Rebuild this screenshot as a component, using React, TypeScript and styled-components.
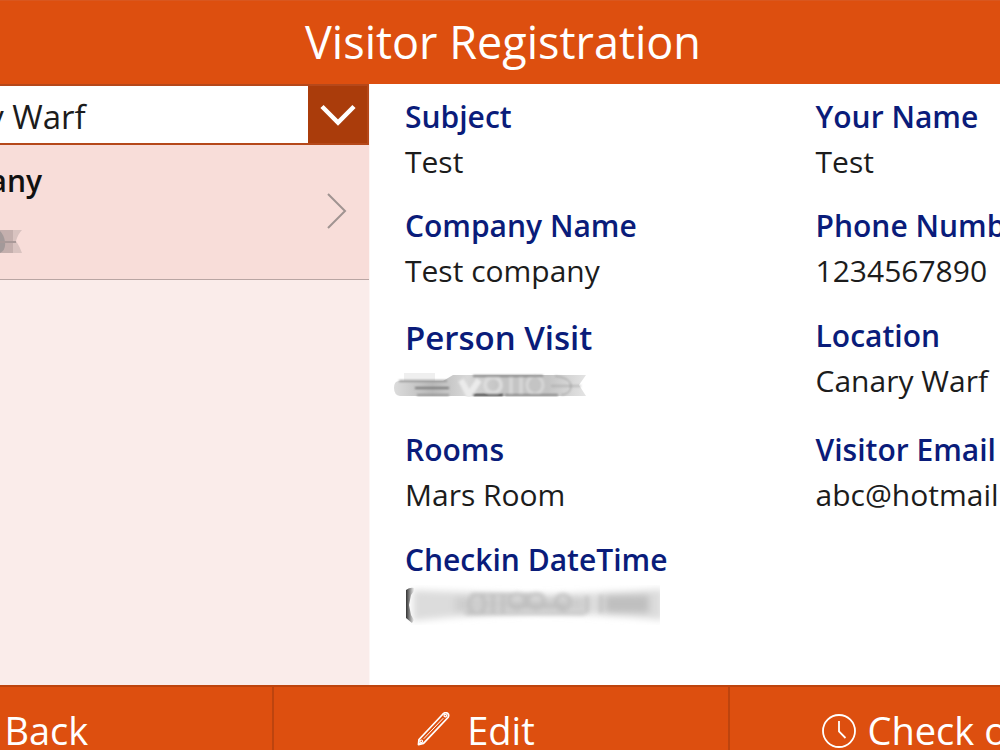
import React from "react";
import styled, { createGlobalStyle } from "styled-components";

const GlobalStyle = createGlobalStyle`
  * { box-sizing: border-box; }
  html, body { margin: 0; overflow: hidden; }
  body { font-family: "Open Sans", "Noto Sans", sans-serif; color: #1c1c1c; background: #fff; }
`;

const Page = styled.div`
  display: flex;
  flex-direction: column;
  height: 100vh;
  overflow: hidden;
`;

const Header = styled.header`
  flex: none;
  height: 84px;
  padding-left: 6px;
  background: #dd4f0f;
  border-top: 1px solid #d9571f;
  text-align: center;
`;

const Title = styled.h1`
  margin: 0;
  color: #fff;
  font-size: 45px;
  line-height: 82px;
  font-weight: 400;
`;

const Main = styled.main`
  flex: 1;
  min-height: 0;
  display: flex;
`;

const Sidebar = styled.aside`
  flex: none;
  width: 37%;
  background: #faecea;
  overflow: hidden;
  border-right: 1px solid #fdf6f5;
`;

const Picker = styled.label`
  display: flex;
  height: 61px;
  margin-left: -120px;
  border: 2px solid #b5481a;
  background: #fff;
`;

const PickerSelect = styled.select`
  flex: 1;
  min-width: 0;
  appearance: none;
  border: 0;
  padding: 4px 0 0 14px;
  background: #fff;
  color: #1c1c1c;
  font: 400 33px/50px "Open Sans", "Noto Sans", sans-serif;
`;

const PickerArrow = styled.span`
  flex: none;
  width: 59px;
  display: flex;
  align-items: center;
  justify-content: center;
  background: #aa3c0b;
`;

const List = styled.ul`
  margin: 0;
  padding: 0;
  list-style: none;
`;

const Visit = styled.li`
  display: flex;
  align-items: center;
  justify-content: space-between;
  height: 135px;
  margin-left: -180px;
  padding: 0 20px 2px 0;
  background: #f8ddd9;
  border-bottom: 1px solid #b9a5a3;
`;

const VisitText = styled.div`
  width: 222px;
  display: flex;
  flex-direction: column;
  align-items: flex-end;
  gap: 10px;
`;

const VisitName = styled.strong`
  font-size: 30px;
  line-height: 44px;
  font-weight: 600;
  color: #111;
  white-space: nowrap;
`;

const VisitPerson = styled.div`
  height: 50px;
  display: flex;
  align-items: center;
  padding: 6px 20px 0 0;
`;

const Details = styled.section`
  flex: 1;
  min-width: 0;
  display: grid;
  grid-template-columns: 69% 69%;
  padding: 10px 0 0 35px;
  overflow: hidden;
`;

const FieldColumn = styled.dl`
  margin: 0;
  display: grid;
  grid-template-rows: 109px 110px 114px 110px 110px;
`;

const Field = styled.div`
  white-space: nowrap;
`;

const Label = styled.dt<{ $large?: boolean }>`
  font-size: ${(p) => (p.$large ? 33 : 30)}px;
  line-height: ${(p) => (p.$large ? 50 : 46)}px;
  font-weight: 600;
  color: #0a1c7a;
`;

const Value = styled.dd`
  margin: 0;
  font-size: 30px;
  line-height: 44px;
`;

const PersonSmudge = styled.svg`
  display: block;
  margin: 10px 0 0 -12px;
`;

const DateSmudge = styled.svg`
  display: block;
  margin-top: 2px;
`;

const Footer = styled.footer`
  flex: none;
  display: flex;
  height: 65px;
  width: 137%;
  margin-left: -18.3%;
  overflow: hidden;
`;

const Action = styled.button`
  flex: 1;
  height: 88px;
  display: flex;
  align-items: center;
  justify-content: center;
  gap: 12px;
  padding: 0 50px 0 0;
  border: 0;
  border-top: 2px solid #bd440e;
  border-right: 2px solid #bd440e;
  background: #dd4f0f;
  color: #fff;
  font: 400 38px/50px "Open Sans", "Noto Sans", sans-serif;
  white-space: nowrap;
`;

function BackIcon() {
  return (
    <svg width="42" height="36" viewBox="0 0 42 36" fill="none" stroke="#fff" strokeWidth="2" aria-hidden="true">
      <path d="M36 18H3M17 4L3 18l14 14" />
    </svg>
  );
}

function PencilIcon() {
  return (
    <svg width="38" height="36" viewBox="0 0 38 36" fill="none" stroke="#fff" strokeWidth="1.8" strokeLinejoin="round" strokeLinecap="round" aria-hidden="true">
      <path d="M1.500 32.500L2 27.500 26 2Q28.500 -.2 30.500 1.300T31 5.500L6.500 31.300Z" />
      <path d="M7 26.500L26 6.500" strokeWidth="1" />
      <circle cx="28.300" cy="3.600" r="1.300" strokeWidth="1.200" />
      <circle cx="4.300" cy="29.300" r="1.300" strokeWidth="1.200" />
    </svg>
  );
}

function ClockIcon() {
  return (
    <svg width="34" height="36" viewBox="0 0 34 36" fill="none" stroke="#fff" strokeWidth="1.8" aria-hidden="true">
      <circle cx="17" cy="19" r="16" />
      <path d="M17 9v10.500l6.500 6.500" />
    </svg>
  );
}

function PersonBlur() {
  return (
    <PersonSmudge width="194" height="24" viewBox="0 0 194 24" role="img" aria-label="Hidden name">
      <defs>
        <filter id="soft" x="-10%" y="-30%" width="120%" height="160%"><feGaussianBlur stdDeviation="1" /></filter>
        <linearGradient id="pg" x1="0" x2="1">
          <stop offset="0" stopColor="#dcdcdc" /><stop offset=".2" stopColor="#b8b8b8" />
          <stop offset=".38" stopColor="#d8d8d8" /><stop offset=".55" stopColor="#c4c4c4" />
          <stop offset=".8" stopColor="#c4c4c4" /><stop offset="1" stopColor="#e4e4e4" />
        </linearGradient>
      </defs>
      <path d="M11 0H42V8H11Z" fill="#efefef" />
      <path d="M6 8H50L60 2H193L186 12 193 23H7Q1 22 1 15T6 8Z" fill="url(#pg)" />
      <g fill="none" filter="url(#soft)">
        <path d="M68 7L76 22 86 7" stroke="#ebebeb" strokeWidth="6" />
        <ellipse cx="100" cy="12" rx="8" ry="8" stroke="#dcdcdc" strokeWidth="4" />
        <ellipse cx="142" cy="12" rx="8" ry="9" stroke="#d6d6d6" strokeWidth="3" />
        <path d="M118 4V21M128 4V21" stroke="#d4d4d4" strokeWidth="4" />
        <path d="M22 15H56" stroke="#777" strokeWidth="2" />
        <path d="M6 8H54M24 22H56" stroke="#999" strokeWidth="2" />
        <path d="M80 22H110" stroke="#333" strokeWidth="2" />
        <path d="M80 3H150M112 22H165" stroke="#888" strokeWidth="2" />
        <path d="M162 3Q178 5 178 13T168 22M158 13H188" stroke="#999" strokeWidth="1" />
      </g>
    </PersonSmudge>
  );
}

function DateBlur() {
  return (
    <DateSmudge width="255" height="40" viewBox="0 0 255 40" role="img" aria-label="Hidden date">
      <defs>
        <filter id="softer" x="-10%" y="-30%" width="120%" height="160%"><feGaussianBlur stdDeviation="3.500" /></filter>
        <filter id="fine" x="-10%" y="-30%" width="120%" height="160%"><feGaussianBlur stdDeviation="2" /></filter>
        <linearGradient id="edge" x1="0" x2="1"><stop offset="0" stopColor="#333" /><stop offset="1" stopColor="#eee" /></linearGradient>
      </defs>
      <g filter="url(#softer)">
        <path d="M8 5Q60 7 125 10 200 8 258 4V35Q190 28 125 28 50 31 8 36Z" fill="#dcdcdc" />
        <path d="M50 12H180V27H50Z" fill="#cecece" />
        <path d="M200 10H244V28H200Z" fill="#bfbfbf" />
      </g>
      <g fill="none" stroke="#bdbdbd" strokeWidth="3" filter="url(#fine)">
        <ellipse cx="72" cy="19" rx="8" ry="9" />
        <path d="M88 10V28M98 11V28" />
        <ellipse cx="112" cy="16" rx="8" ry="7" />
        <ellipse cx="131" cy="16" rx="8" ry="7" />
        <path d="M104 21H160M66 10H138M60 28H180M182 11V28M196 10V28" />
        <ellipse cx="158" cy="17" rx="7" ry="7" />
      </g>
      <path d="M1 5Q5 2 9 3V6L6 10 4 20 6 30 9 35 7 38 1 33Z" fill="url(#edge)" />
    </DateSmudge>
  );
}

type FieldData = { label: string; value: React.ReactNode; large?: boolean };

const leftFields: FieldData[] = [
  { label: "Subject", value: "Test" },
  { label: "Company Name", value: "Test company" },
  { label: "Person Visit", value: <PersonBlur />, large: true },
  { label: "Rooms", value: "Mars Room" },
  { label: "Checkin DateTime", value: <DateBlur /> },
];

const rightFields: FieldData[] = [
  { label: "Your Name", value: "Test" },
  { label: "Phone Number", value: "1234567890" },
  { label: "Location", value: "Canary Warf" },
  { label: "Visitor Email", value: "abc@hotmail.com" },
];

function Fields({ items }: { items: FieldData[] }) {
  return (
    <FieldColumn>
      {items.map((f) => (
        <Field key={f.label}>
          <Label $large={f.large}>{f.label}</Label>
          <Value>{f.value}</Value>
        </Field>
      ))}
    </FieldColumn>
  );
}

export default function App() {
  return (
    <Page>
      <GlobalStyle />
      <Header>
        <Title>Visitor Registration</Title>
      </Header>
      <Main>
        <Sidebar>
          <Picker>
            <PickerSelect aria-label="Location" defaultValue="Canary Warf">
              <option>Canary Warf</option>
            </PickerSelect>
            <PickerArrow>
              <svg width="36" height="22" viewBox="0 0 36 22" fill="none" stroke="#fff" strokeWidth="4.500" aria-hidden="true">
                <path d="M2 2.500L18 18.500 34 2.500" />
              </svg>
            </PickerArrow>
          </Picker>
          <List>
            <Visit>
              <VisitText>
                <VisitName>Test company</VisitName>
                <VisitPerson>
                  <svg width="60" height="23" viewBox="0 0 60 23" role="img" aria-label="Hidden name">
                    <path d="M0 0H60Q56 4 54 11 58 17 60 23H0Z" fill="#d9c3c0" />
                    <path d="M0 0H51V23H0Z" fill="#c4afad" />
                    <path d="M0 0H37Q42 4 43 12T38 23H0Z" fill="#a39999" />
                    <path d="M36 12H54" stroke="#a99998" strokeWidth="2" />
                  </svg>
                </VisitPerson>
              </VisitText>
              <svg width="22" height="36" viewBox="0 0 22 36" fill="none" stroke="#a09391" strokeWidth="2" aria-hidden="true">
                <path d="M1 1L18 18 1 35" />
              </svg>
            </Visit>
          </List>
        </Sidebar>
        <Details>
          <Fields items={leftFields} />
          <Fields items={rightFields} />
        </Details>
      </Main>
      <Footer>
        <Action><BackIcon />Back</Action>
        <Action><PencilIcon />Edit</Action>
        <Action><ClockIcon />Check out</Action>
      </Footer>
    </Page>
  );
}
